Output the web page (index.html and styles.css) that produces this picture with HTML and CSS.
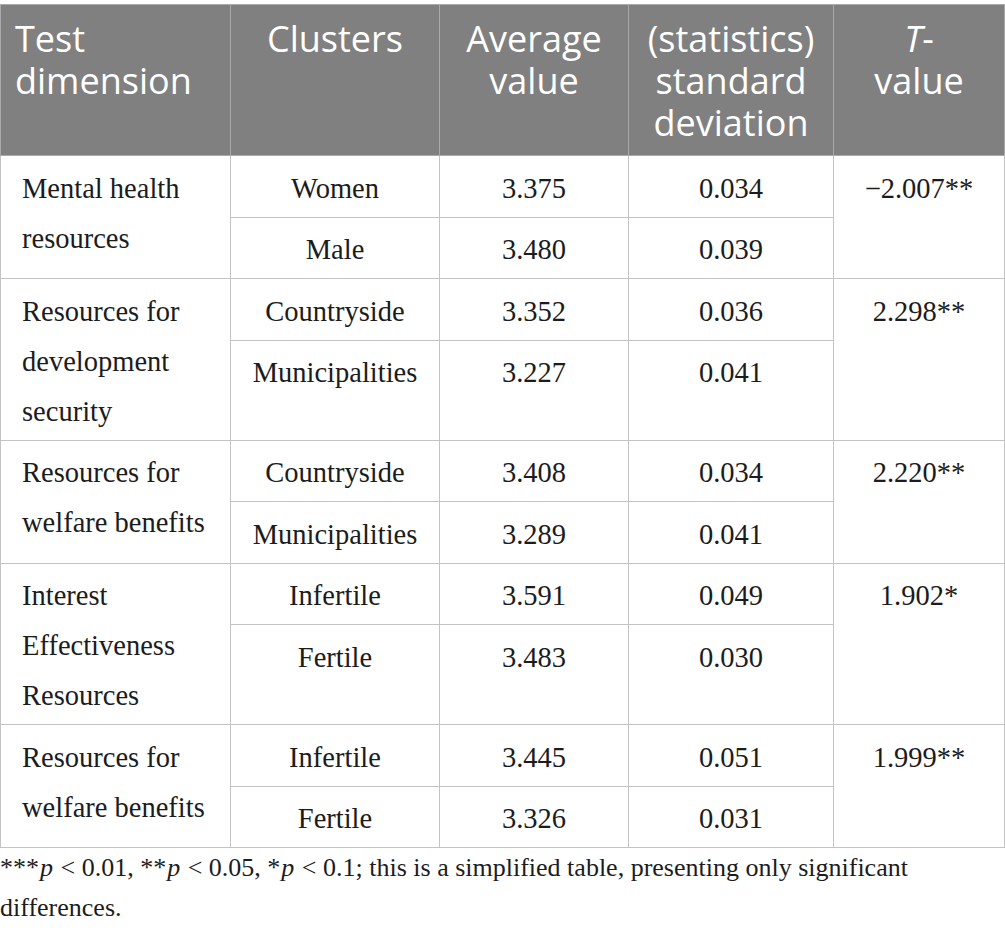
FILE: index.html
```html
<!DOCTYPE html>
<html lang="en">
<head>
<meta charset="utf-8">
<title>Table</title>
<link rel="stylesheet" href="styles.css">
</head>
<body>
<div class="wrap">
<table class="data">
  <colgroup>
    <col class="c1"><col class="c2"><col class="c3"><col class="c4"><col class="c5">
  </colgroup>
  <thead>
    <tr>
      <th class="left">Test dimension</th>
      <th>Clusters</th>
      <th>Average value</th>
      <th>(statistics) standard deviation</th>
      <th><i>T</i>-<br>value</th>
    </tr>
  </thead>
  <tbody>
    <tr class="first">
      <td class="left" rowspan="2">Mental health resources</td>
      <td>Women</td><td>3.375</td><td>0.034</td>
      <td rowspan="2">−2.007**</td>
    </tr>
    <tr><td>Male</td><td>3.480</td><td>0.039</td></tr>

    <tr class="first">
      <td class="left" rowspan="2">Resources for development security</td>
      <td>Countryside</td><td>3.352</td><td>0.036</td>
      <td rowspan="2">2.298**</td>
    </tr>
    <tr><td>Municipalities</td><td>3.227</td><td>0.041</td></tr>

    <tr class="first">
      <td class="left" rowspan="2">Resources for welfare benefits</td>
      <td>Countryside</td><td>3.408</td><td>0.034</td>
      <td rowspan="2">2.220**</td>
    </tr>
    <tr><td>Municipalities</td><td>3.289</td><td>0.041</td></tr>

    <tr class="first">
      <td class="left" rowspan="2">Interest Effectiveness Resources</td>
      <td>Infertile</td><td>3.591</td><td>0.049</td>
      <td rowspan="2">1.902*</td>
    </tr>
    <tr><td>Fertile</td><td>3.483</td><td>0.030</td></tr>

    <tr class="first">
      <td class="left" rowspan="2">Resources for welfare benefits</td>
      <td>Infertile</td><td>3.445</td><td>0.051</td>
      <td rowspan="2">1.999**</td>
    </tr>
    <tr><td>Fertile</td><td>3.326</td><td>0.031</td></tr>
  </tbody>
</table>
<p class="note">***<i>p</i> &lt; 0.01, **<i>p</i> &lt; 0.05, *<i>p</i> &lt; 0.1; this is a simplified table, presenting only significant differences.</p>
</div>
</body>
</html>
```

FILE: styles.css
```css
html, body {
  margin: 0;
  padding: 0;
  background: #ffffff;
}

.wrap {
  padding-top: 4px;
  width: 1005px;
}

.data {
  border-collapse: collapse;
  table-layout: fixed;
  width: 1004px;
  border: 1px solid #bdbdbd;
}

.c1 { width: 230px; }
.c2 { width: 209px; }
.c3 { width: 189px; }
.c4 { width: 205px; }
.c5 { width: 171px; }

.data th {
  background: #808080;
  color: #ffffff;
  font-family: "Open Sans", "Lato", sans-serif;
  font-weight: 400;
  font-size: 36px;
  line-height: 42px;
  text-align: center;
  vertical-align: top;
  padding: 13px 6px 11px;
  border: 1px solid #a9a9a9;
}

.data th.left {
  text-align: left;
  padding-left: 14px;
}

.data tr.first {
  height: 61.5px;
}

.data td {
  font-family: "Liberation Serif", "Times New Roman", serif;
  font-size: 28.5px;
  line-height: 50px;
  color: #1c1c1c;
  text-align: center;
  vertical-align: top;
  padding: 7.5px 8px 3px;
  border: 1px solid #c4c4c4;
}

.data td.left {
  text-align: left;
  padding-left: 21px;
  padding-right: 8px;
}

.note {
  margin: 0;
  font-family: "Liberation Serif", "Times New Roman", serif;
  font-size: 26px;
  line-height: 40px;
  color: #1c1c1c;
}

.note i {
  margin: 0 1px;
}
```
